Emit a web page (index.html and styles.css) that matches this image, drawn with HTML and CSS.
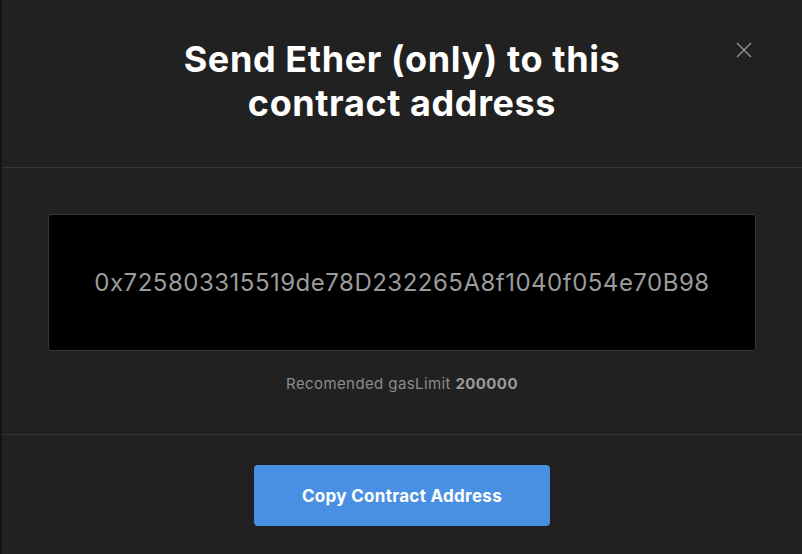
FILE: index.html
```html
<!DOCTYPE html>
<html>
<head>
<meta charset="utf-8">
<link rel="stylesheet" href="styles.css">
</head>
<body>
<div class="page">
  <div class="modal">
    <div class="modal-header">
      <h1 class="title">Send Ether (only) to this<br>contract address</h1>
      <button class="close" aria-label="Close">
        <svg width="16" height="16" viewBox="0 0 16 16"><path d="M1 1L15 15M15 1L1 15" stroke="#9a9a9a" stroke-width="1.2" fill="none"/></svg>
      </button>
    </div>
    <div class="modal-body">
      <div class="address-box">0x725803315519de78D232265A8f1040f054e70B98</div>
      <p class="gas">Recomended gasLimit <b>200000</b></p>
    </div>
    <div class="modal-footer">
      <button class="copy">Copy Contract Address</button>
    </div>
  </div>
</div>
</body>
</html>
```

FILE: styles.css
```css
html, body {
  margin: 0;
  padding: 0;
  height: 100%;
  overflow: hidden;
}
body {
  background: #141414;
  font-family: Inter, "Noto Sans", sans-serif;
}
.page {
  display: flex;
  height: 100%;
  padding-left: 2px;
}
.modal {
  width: 800px;
  flex: none;
  background: #212121;
  height: 100%;
}
.modal-header {
  position: relative;
  border-bottom: 1px solid #363636;
  padding: 37px 46px 38px;
  height: 92px;
}
.title {
  margin: 0;
  text-align: center;
  color: #fff;
  font-size: 36px;
  line-height: 44px;
  font-weight: 700;
  letter-spacing: 0.6px;
}
.close {
  position: absolute;
  top: 42px;
  right: 50px;
  background: none;
  border: 0;
  padding: 0;
  width: 16px;
  height: 16px;
  display: flex;
}
.modal-body {
  padding: 46px 46px 0;
  height: 220px;
  border-bottom: 1px solid #363636;
  display: flex;
  flex-direction: column;
  align-items: stretch;
}
.address-box {
  height: 135px;
  background: #000;
  border: 1px solid #353535;
  border-radius: 3px;
  display: flex;
  align-items: center;
  justify-content: center;
  color: #9b9b9b;
  font-size: 24px;
  letter-spacing: 0.5px;
}
.gas {
  margin: 23px 0 0;
  text-align: center;
  color: #8c8c8c;
  font-size: 15px;
  letter-spacing: 0.4px;
}
.gas b {
  font-weight: 700;
  color: #9b9b9b;
}
.modal-footer {
  display: flex;
  justify-content: center;
  padding-top: 30px;
}
.copy {
  width: 296px;
  height: 61px;
  border: 0;
  border-radius: 4px;
  background: #4a90e2;
  color: #fff;
  font-family: Inter, "Noto Sans", sans-serif;
  font-size: 17px;
  font-weight: 700;
  letter-spacing: 0.3px;
}
```
